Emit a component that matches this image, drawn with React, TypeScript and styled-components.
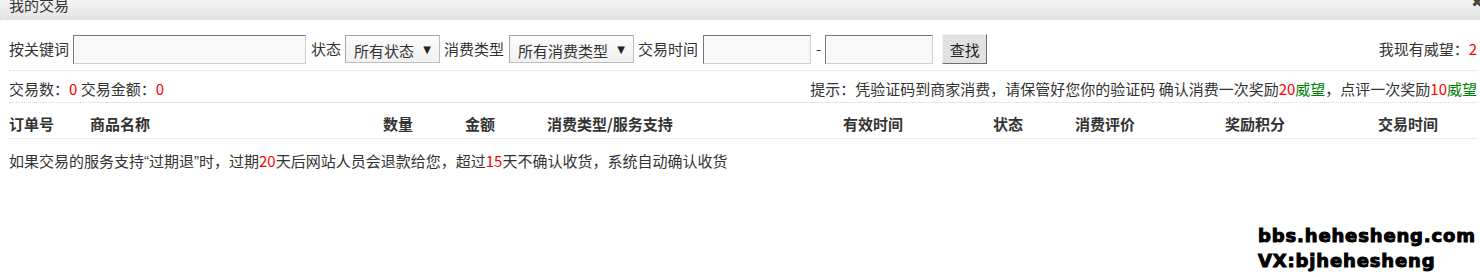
import React from "react";
import styled, { createGlobalStyle } from "styled-components";

const Global = createGlobalStyle`
  html, body { margin: 0; padding: 0; background: #fff; }
  body { font-family: "Noto Sans CJK SC", "Noto Sans", sans-serif; color: #333; font-size: 15px; }
  * { box-sizing: border-box; }
`;

const Page = styled.div`
  position: relative;
  width: 1480px;
  height: 277px;
  overflow: hidden;
`;

const TitleBar = styled.div`
  height: 20px;
  display: flex;
  justify-content: space-between;
  align-items: flex-start;
  padding-left: 9px;
  background: linear-gradient(#f3f3f3, #e4e4e4);
  border-bottom: 1px dotted #c6d6e6;
  overflow: hidden;
`;

const TitleText = styled.span`
  font-size: 15px;
  line-height: 20px;
  margin-top: -5px;
  color: #333;
`;

const Close = styled.span`
  font-family: "DejaVu Sans", sans-serif;
  font-weight: bold;
  font-size: 14px;
  line-height: 14px;
  margin-top: -5px;
  margin-right: -3px;
  color: #444;
`;

const Body = styled.div`
  padding: 0 3px 0 9px;
`;

const SearchRow = styled.div`
  display: flex;
  align-items: center;
  height: 51px;
  padding-top: 14px;
  padding-bottom: 6px;
  border-bottom: 1px dotted #d6d6d6;
`;

const Label = styled.span<{ $gap?: number }>`
  white-space: nowrap;
  margin-right: ${(p) => p.$gap ?? 5}px;
  line-height: 20px;
`;

const TextInput = styled.div<{ $w: number }>`
  width: ${(p) => p.$w}px;
  height: 29px;
  margin-right: 5px;
  background: #f8f8f8;
  border-style: solid;
  border-width: 1px;
  border-color: #767676 #cfcfcf #cfcfcf #767676;
`;

const FirstInput = styled(TextInput)`
  margin-left: -1px;
`;

const SelectBox = styled.div<{ $w: number }>`
  width: ${(p) => p.$w}px;
  height: 28px;
  margin-right: 4px;
  display: flex;
  align-items: center;
  justify-content: space-between;
  padding: 2px 8px 0 8px;
  background: linear-gradient(#fbfbfb, #f1f1f1);
  border: 1px solid #a6a6a6;
  border-right-color: #bdbdbd;
  border-bottom-color: #bdbdbd;
  font-size: 15px;
`;

const Arrow = styled.span`
  font-family: "DejaVu Sans", sans-serif;
  font-size: 10px;
  color: #222;
  margin-top: -2px;
`;

const Dash = styled.span`
  margin: 0 4px 0 0;
  line-height: 20px;
`;

const Button = styled.div`
  margin-left: 4px;
  width: 45px;
  height: 30px;
  display: flex;
  align-items: center;
  justify-content: center;
  background: #e1e1e1;
  border-style: solid;
  border-width: 1px;
  border-color: #f2f2f2 #6e6e6e #6e6e6e #f2f2f2;
  color: #222;
`;

const Spacer = styled.div`
  flex: 1;
`;

const Red = styled.span`
  color: #ff0000;
`;

const Green = styled.span`
  color: #008000;
`;

const Quote = styled.span`
  font-family: "Liberation Sans", sans-serif;
`;

const StatRow = styled.div`
  display: flex;
  justify-content: space-between;
  align-items: center;
  height: 31px;
  padding-top: 3px;
  white-space: nowrap;
`;

const Rule = styled.div`
  display: flex;
  height: 1px;
  border-top: 1px dotted #d6d6d6;
`;

const RuleSolid = styled.div`
  margin-left: 79px;
  width: 1137px;
  height: 1px;
  margin-top: -1px;
  background: #dde9f4;
`;

const HeaderRow = styled.div`
  display: grid;
  grid-template-columns: 81px 293px 82px 82px 296px 150px 82px 150px 153px 1fr;
  align-items: center;
  height: 36px;
  padding-top: 6px;
  font-weight: bold;
  border-bottom: 1px dotted #d6d6d6;
  white-space: nowrap;
`;

const Note = styled.div`
  height: 40px;
  display: flex;
  align-items: center;
  padding-top: 3px;
  white-space: nowrap;
`;

const Watermark = styled.div`
  position: absolute;
  left: 1258px;
  top: 223px;
  font-family: "DejaVu Sans", sans-serif;
  font-weight: bold;
  font-size: 18px;
  line-height: 25px;
  color: #000;
  letter-spacing: 0.85px;
  -webkit-text-stroke: 1px #000;
`;

const columns = [
  "订单号",
  "商品名称",
  "数量",
  "金额",
  "消费类型/服务支持",
  "有效时间",
  "状态",
  "消费评价",
  "奖励积分",
  "交易时间",
];

export default function App() {
  return (
    <Page>
      <Global />
      <TitleBar>
        <TitleText>我的交易</TitleText>
        <Close>✖</Close>
      </TitleBar>
      <Body>
        <SearchRow>
          <Label>按关键词</Label>
          <FirstInput $w={233} />
          <Label $gap={4}>状态</Label>
          <SelectBox $w={95}>
            <span>所有状态</span>
            <Arrow>▼</Arrow>
          </SelectBox>
          <Label>消费类型</Label>
          <SelectBox $w={125}>
            <span>所有消费类型</span>
            <Arrow>▼</Arrow>
          </SelectBox>
          <Label>交易时间</Label>
          <TextInput $w={108} />
          <Dash>-</Dash>
          <TextInput $w={108} />
          <Button>查找</Button>
          <Spacer />
          <Label $gap={0}>
            我现有威望：<Red>2</Red>
          </Label>
        </SearchRow>
        <StatRow>
          <span>
            交易数：<Red>0</Red> 交易金额：<Red>0</Red>
          </span>
          <span>
            提示：凭验证码到商家消费，请保管好您你的验证码 确认消费一次奖励<Red>20</Red>
            <Green>威望</Green>，点评一次奖励<Red>10</Red>
            <Green>威望</Green>
          </span>
        </StatRow>
        <Rule>
          <RuleSolid />
        </Rule>
        <HeaderRow>
          {columns.map((c) => (
            <span key={c}>{c}</span>
          ))}
        </HeaderRow>
        <Note>
          如果交易的服务支持<Quote>“</Quote>过期退<Quote>”</Quote>时，过期<Red>20</Red>
          天后网站人员会退款给您，超过<Red>15</Red>天不确认收货，系统自动确认收货
        </Note>
      </Body>
      <Watermark>
        bbs.hehesheng.com
        <br />
        VX:bjhehesheng
      </Watermark>
    </Page>
  );
}
